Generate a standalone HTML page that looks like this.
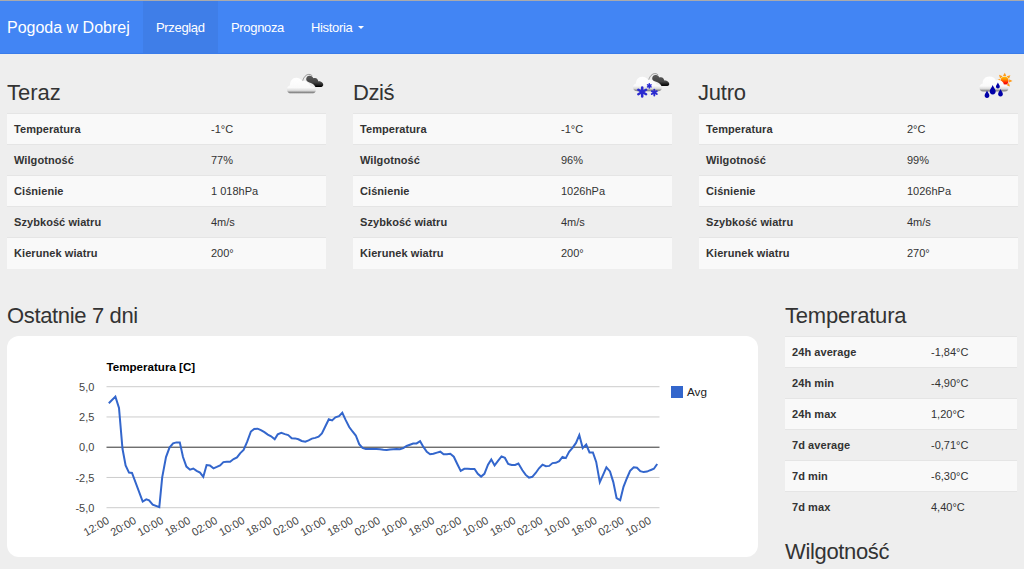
<!DOCTYPE html>
<html><head><meta charset="utf-8">
<style>
*{box-sizing:border-box}
html,body{margin:0;padding:0}
body{width:1024px;height:569px;overflow:hidden;background:#eeeeee;font-family:"Liberation Sans",sans-serif;font-size:11px;color:#333;line-height:1.42857}
.topline{position:absolute;left:0;top:0;width:1024px;height:1px;background:#aaaaac}
.nav{position:absolute;left:0;top:1px;width:1024px;height:53px;background:#4285f4;border-bottom:1px solid #3a7cea}
.brand{position:absolute;left:7px;top:0;height:53px;line-height:53px;font-size:16px;color:#fff}
.ni{position:absolute;top:0;height:52px;line-height:53px;font-size:13px;color:#fff;padding:0 0 0 13px;letter-spacing:-0.33px;white-space:nowrap}
.ni.act{background:#3f7ee8}
.caret{display:inline-block;width:0;height:0;margin-left:2px;vertical-align:middle;border-top:3.5px solid #fff;border-right:3.2px solid transparent;border-left:3.2px solid transparent;position:relative;top:-1px}
h2{position:absolute;margin:0;font-weight:normal;font-size:22px;line-height:24px;color:#333}
table{position:absolute;border-collapse:collapse;border-spacing:0}
td{padding:2px 0 0 7px;height:31px;border-top:1px solid #e5e5e5;font-size:11px;vertical-align:middle;color:#333}
td.k{font-weight:bold;letter-spacing:0.07px}
tr.o td{background:#f9f9f9}
.rt td{padding-top:1px}
.ic{position:absolute;overflow:visible}
.chart{position:absolute;left:7px;top:336px;width:751px;height:221px;background:#fff;border-radius:12px}
</style></head><body>
<div class="topline"></div>
<div class="nav">
 <div class="brand">Pogoda w Dobrej</div>
 <div class="ni act" style="left:143px;width:75px">Przegląd</div>
 <div class="ni" style="left:218px">Prognoza</div>
 <div class="ni" style="left:298px">Historia <span class="caret"></span></div>
</div>

<!--ICONS--><svg width="0" height="0" style="position:absolute"><defs>
<linearGradient id="gw" x1="0" y1="0" x2="0" y2="1"><stop offset="0" stop-color="#ffffff"/><stop offset="0.62" stop-color="#fafafa"/><stop offset="0.8" stop-color="#dcdcdc"/><stop offset="0.93" stop-color="#8a8a8a"/><stop offset="1" stop-color="#b0b0b0"/></linearGradient>
<linearGradient id="gw2" x1="0" y1="0" x2="0" y2="1"><stop offset="0" stop-color="#ffffff"/><stop offset="0.7" stop-color="#fafafa"/><stop offset="0.9" stop-color="#d8d8d8"/><stop offset="1" stop-color="#b8b8b8"/></linearGradient>
<linearGradient id="gd" x1="0" y1="0" x2="0" y2="1"><stop offset="0" stop-color="#5a5a5a"/><stop offset="0.6" stop-color="#444444"/><stop offset="0.85" stop-color="#1a1a1a"/><stop offset="1" stop-color="#000000"/></linearGradient>
<linearGradient id="gs" x1="0" y1="0" x2="0" y2="1"><stop offset="0" stop-color="#ffc200"/><stop offset="0.35" stop-color="#ff8a00"/><stop offset="0.75" stop-color="#ff1a00"/><stop offset="1" stop-color="#f00000"/></linearGradient>
<filter id="bl" x="-10%" y="-10%" width="120%" height="120%"><feGaussianBlur stdDeviation="0.35"/></filter>
</defs></svg>
<svg class="ic" style="left:284px;top:68px" width="44" height="32" viewBox="0 0 44 32"><g filter="url(#bl)"><path d="M22.3,12 C21.8,9 23.8,7.6 26,7.7 C27.6,7.7 28.8,8.8 29.3,10.2 C30.2,9.9 32.4,10 33.4,11.2 C34,12 34.3,12.8 34.3,13.4 C35.6,13.2 37.6,13.6 38.6,15 C39.8,16.6 39.4,18.4 37.4,18.9 L31.5,18.9 C30,16 27,14.6 25.4,14.4 C24,14 22.6,13.2 22.3,12 Z" fill="url(#gd)"/><path d="M18.8,12.6 C19.6,9.2 22.2,6.4 24.8,6.4 C26.4,6.4 27.6,7 28.2,7.9" fill="none" stroke="#8c8c8c" stroke-width="0.9"/><path d="M7.6,25.6 C4.8,25.6 3,23.8 3,21.4 C3,19.4 4.2,17.8 6,17.2 C5.8,13 8.6,9.8 12.2,9.8 C15,9.8 17.2,11.2 18.3,13.2 C19.8,12.8 22,13.2 23.6,14.4 C25.2,15.6 26.2,17 26.6,18.2 C29.6,18.4 31.8,19.8 31.8,22.2 C31.8,24.4 30,25.6 27.4,25.6 Z" fill="url(#gw)"/></g></svg>
<svg class="ic" style="left:630px;top:67px" width="44" height="34" viewBox="0 0 44 34"><g filter="url(#bl)"><path d="M22.3,12 C21.8,9 23.8,7.6 26,7.7 C27.6,7.7 28.8,8.8 29.3,10.2 C30.2,9.9 32.4,10 33.4,11.2 C34,12 34.3,12.8 34.3,13.4 C35.6,13.2 37.6,13.6 38.6,15 C39.8,16.6 39.4,18.4 37.4,18.9 L31.5,18.9 C30,16 27,14.6 25.4,14.4 C24,14 22.6,13.2 22.3,12 Z" fill="url(#gd)" transform="translate(0,0.2)"/><path d="M18.8,12.6 C19.6,9.2 22.2,6.4 24.8,6.4 C26.4,6.4 27.6,7 28.2,7.9" fill="none" stroke="#8c8c8c" stroke-width="0.9" transform="translate(0,0.2)"/><path d="M7.6,25.6 C4.8,25.6 3,23.8 3,21.4 C3,19.4 4.2,17.8 6,17.2 C5.8,13 8.6,9.8 12.2,9.8 C15,9.8 17.2,11.2 18.3,13.2 C19.8,12.8 22,13.2 23.6,14.4 C25.2,15.6 26.2,17 26.6,18.2 C29.6,18.4 31.8,19.8 31.8,22.2 C31.8,24.4 30,25.6 27.4,25.6 Z" fill="url(#gw)" transform="translate(0,0.6) scale(1,0.93)"/><g stroke="#2b2bd0" stroke-width="2.50" stroke-linecap="round"><line x1="12.20" y1="20.50" x2="12.20" y2="29.50"/><line x1="16.10" y1="22.75" x2="8.30" y2="27.25"/><line x1="16.10" y1="27.25" x2="8.30" y2="22.75"/></g><g stroke="#2b2bd0" stroke-width="1.60" stroke-linecap="round"><line x1="19.30" y1="16.90" x2="19.30" y2="20.90"/><line x1="21.03" y1="17.90" x2="17.57" y2="19.90"/><line x1="21.03" y1="19.90" x2="17.57" y2="17.90"/></g><g stroke="#2b2bd0" stroke-width="1.90" stroke-linecap="round"><line x1="24.30" y1="22.70" x2="24.30" y2="28.50"/><line x1="26.81" y1="24.15" x2="21.79" y2="27.05"/><line x1="26.81" y1="27.05" x2="21.79" y2="24.15"/></g></g></svg>
<svg class="ic" style="left:976px;top:67px" width="44" height="34" viewBox="0 0 44 34"><g filter="url(#bl)"><path d="M26.93,9.06 L30.39,9.18 L28.78,5.70 Z" fill="#ff9a1a"/><path d="M30.68,9.31 L33.03,11.83 L34.35,8.24 Z" fill="#ff9a1a"/><path d="M33.14,12.13 L33.02,15.59 L36.50,13.98 Z" fill="#ff9a1a"/><path d="M32.89,15.88 L30.37,18.23 L33.96,19.55 Z" fill="#ff9a1a"/><path d="M30.07,18.34 L26.61,18.22 L28.22,21.70 Z" fill="#ff9a1a"/><path d="M26.32,18.09 L23.97,15.57 L22.65,19.16 Z" fill="#ff9a1a"/><path d="M23.86,15.27 L23.98,11.81 L20.50,13.42 Z" fill="#ff9a1a"/><path d="M24.11,11.52 L26.63,9.17 L23.04,7.85 Z" fill="#ff9a1a"/><circle cx="28.50" cy="13.70" r="4.00" fill="url(#gs)"/><path fill="url(#gw)" d="M7.6,24.8 C5,24.8 3.4,23 3.4,20.8 C3.4,18.6 4.8,17 6.7,16.5 C6.4,12.4 9.6,9.6 13.4,9.6 C16.4,9.6 18.8,11.2 20,13.4 C21.6,12.6 24,12.8 25.6,14 C27.2,15.2 27.8,16.6 27.8,17.6 C30.4,17.4 32.4,18.8 32.4,21.2 C32.4,23.6 30.6,24.8 28.4,24.8 Z"/><path d="M11.00,23.40 C11.72,25.32 13.16,26.76 13.28,27.96 A2.40,2.40 0 1 1 8.72,27.96 C8.84,26.76 10.28,25.32 11.00,23.40 Z" fill="#0000a8"/><path d="M16.70,17.90 C17.60,20.30 19.40,22.10 19.55,23.60 A3.00,3.00 0 1 1 13.85,23.60 C14.00,22.10 15.80,20.30 16.70,17.90 Z" fill="#0000a8"/><path d="M21.90,15.50 C22.47,17.02 23.61,18.16 23.70,19.11 A1.90,1.90 0 1 1 20.09,19.11 C20.19,18.16 21.33,17.02 21.90,15.50 Z" fill="#0000a8"/><path d="M24.50,21.90 C25.22,23.82 26.66,25.26 26.78,26.46 A2.40,2.40 0 1 1 22.22,26.46 C22.34,25.26 23.78,23.82 24.50,21.90 Z" fill="#0000a8"/></g></svg><!--/ICONS-->
<h2 style="left:7px;top:81px">Teraz</h2>
<h2 style="left:353px;top:81px;letter-spacing:-0.4px">Dziś</h2>
<h2 style="left:698px;top:81px;letter-spacing:-0.2px">Jutro</h2>

<table style="left:7px;top:113px;width:319px">
<tr class="o"><td class="k" style="width:197px">Temperatura</td><td>-1°C</td></tr>
<tr><td class="k">Wilgotność</td><td>77%</td></tr>
<tr class="o"><td class="k">Ciśnienie</td><td>1 018hPa</td></tr>
<tr><td class="k">Szybkość wiatru</td><td>4m/s</td></tr>
<tr class="o"><td class="k">Kierunek wiatru</td><td>200°</td></tr>
</table>
<table style="left:353px;top:113px;width:319px">
<tr class="o"><td class="k" style="width:201px">Temperatura</td><td>-1°C</td></tr>
<tr><td class="k">Wilgotność</td><td>96%</td></tr>
<tr class="o"><td class="k">Ciśnienie</td><td>1026hPa</td></tr>
<tr><td class="k">Szybkość wiatru</td><td>4m/s</td></tr>
<tr class="o"><td class="k">Kierunek wiatru</td><td>200°</td></tr>
</table>
<table style="left:699px;top:113px;width:319px">
<tr class="o"><td class="k" style="width:201px">Temperatura</td><td>2°C</td></tr>
<tr><td class="k">Wilgotność</td><td>99%</td></tr>
<tr class="o"><td class="k">Ciśnienie</td><td>1026hPa</td></tr>
<tr><td class="k">Szybkość wiatru</td><td>4m/s</td></tr>
<tr class="o"><td class="k">Kierunek wiatru</td><td>270°</td></tr>
</table>

<h2 style="left:7px;top:304px;letter-spacing:-0.35px">Ostatnie 7 dni</h2>
<div class="chart">
<svg width="751" height="221" viewBox="0 0 751 221" style="position:absolute;left:0;top:0;font-family:'Liberation Sans',sans-serif">
<text x="99.5" y="34.6" font-size="11.6" font-weight="bold" fill="#000">Temperatura [C]</text>
<rect x="99.5" y="50.20" width="553" height="1" fill="#cccccc"/>
<text x="87.4" y="54.8" font-size="11" text-anchor="end" fill="#444">5,0</text>
<rect x="99.5" y="80.45" width="553" height="1" fill="#cccccc"/>
<text x="87.4" y="85" font-size="11" text-anchor="end" fill="#444">2,5</text>
<rect x="99.5" y="110.70" width="553" height="1" fill="#333333"/>
<text x="87.4" y="115.3" font-size="11" text-anchor="end" fill="#444">0,0</text>
<rect x="99.5" y="140.95" width="553" height="1" fill="#cccccc"/>
<text x="87.4" y="145.5" font-size="11" text-anchor="end" fill="#444">-2,5</text>
<rect x="99.5" y="171.20" width="553" height="1" fill="#cccccc"/>
<text x="87.4" y="175.8" font-size="11" text-anchor="end" fill="#444">-5,0</text>
<polyline fill="none" stroke="#3366cc" stroke-width="2" points="101.8,67.3 108.4,60.6 112,72 115.5,112.8 118.6,129.4 122,136.6 125,137 135.7,165.5 139.3,163.4 142.1,164.3 145.7,168.6 152.3,171.2 155.2,141.3 159,121.1 162.5,111.6 166.1,107.4 169.4,106.4 172.8,106.4 176,121 179.4,130.6 183,133.7 186.3,132.5 189.6,134.9 193,136.6 196.3,140.8 199.6,129 202.9,129.4 206.5,132.3 209.8,130.9 213.1,129.4 216.4,126.1 219.7,125.7 223.1,125.7 226.6,123 230,121.4 233.3,117.1 236.6,114 240.2,105.7 243.9,95.5 247.2,92.9 250.6,92.7 253.9,94.1 257.4,96.2 260.8,98.6 264.1,100.3 267.7,103.3 270.7,98.4 274.3,96.9 277.9,98.1 281.2,99.1 284.7,102.2 288.1,102.4 291.4,103.3 294.7,105 298.3,105.7 301.6,104.3 304.9,102.6 308.2,101.9 311.6,100.7 314.9,97.4 318.4,90.3 321.8,83.2 325.1,84.4 328.4,81.3 332,80.1 335.3,76.8 338.6,83.9 342.2,91 345.5,95.5 348.8,99.5 352.2,108.1 355.5,111.9 358.8,113.1 362.4,113.1 365.9,113.1 369.5,113.1 373,113.3 376.4,113.8 379.7,114 383,113.5 386.3,113.3 389.6,113.1 392.9,113.3 396.3,112.1 399.6,110 402.9,108.8 406.2,107.6 409.6,107.4 413.1,105.2 416.4,110.9 419.8,115.9 423.1,118.3 426.4,117.8 430,116.6 433.3,115.7 436.6,118.3 439.9,118.3 443.3,117.8 446.8,120.7 450.4,128.3 453.7,134.9 457.3,132.8 460.6,132.8 463.9,133 467.5,133 470.8,137.8 474.1,140.6 477.4,137.8 481,128.7 484.3,123.5 487.6,129.4 491.2,124.7 494.5,120.4 497.9,121.9 501.2,128 504.7,129 508.1,129 511.4,127.6 515.4,134.2 518.7,138.9 522,141.6 525.3,140.8 528.7,137 532,132.3 535.5,128.7 538.9,130.2 542.2,129.9 545.5,127.1 548.8,126.8 552.2,125.2 555.5,120.9 558.8,122.1 562.1,115.9 565.7,111.6 569,106.9 572.3,99.1 575.7,112.1 579.2,108.6 582.5,116.4 585.9,116.4 589.2,125.9 592.8,146.1 596.1,138.9 599.4,131.3 603,135.4 606.3,146.1 609.6,162.2 613.2,164.3 616.5,150.8 619.8,142.5 623.1,134.9 626.7,131.3 630,131.8 633.3,135.1 636.7,136.1 640,135.6 643.3,134.2 646.9,132.8 650.2,128"/>
<text x="103" y="186.8" font-size="11" text-anchor="end" fill="#444" transform="rotate(-30 103 186.8)">12:00</text>
<text x="130.1" y="186.8" font-size="11" text-anchor="end" fill="#444" transform="rotate(-30 130.1 186.8)">20:00</text>
<text x="157.2" y="186.8" font-size="11" text-anchor="end" fill="#444" transform="rotate(-30 157.2 186.8)">10:00</text>
<text x="184.3" y="186.8" font-size="11" text-anchor="end" fill="#444" transform="rotate(-30 184.3 186.8)">18:00</text>
<text x="211.4" y="186.8" font-size="11" text-anchor="end" fill="#444" transform="rotate(-30 211.4 186.8)">02:00</text>
<text x="238.5" y="186.8" font-size="11" text-anchor="end" fill="#444" transform="rotate(-30 238.5 186.8)">10:00</text>
<text x="265.6" y="186.8" font-size="11" text-anchor="end" fill="#444" transform="rotate(-30 265.6 186.8)">18:00</text>
<text x="292.7" y="186.8" font-size="11" text-anchor="end" fill="#444" transform="rotate(-30 292.7 186.8)">02:00</text>
<text x="319.8" y="186.8" font-size="11" text-anchor="end" fill="#444" transform="rotate(-30 319.8 186.8)">10:00</text>
<text x="346.9" y="186.8" font-size="11" text-anchor="end" fill="#444" transform="rotate(-30 346.9 186.8)">18:00</text>
<text x="374" y="186.8" font-size="11" text-anchor="end" fill="#444" transform="rotate(-30 374 186.8)">02:00</text>
<text x="401.1" y="186.8" font-size="11" text-anchor="end" fill="#444" transform="rotate(-30 401.1 186.8)">10:00</text>
<text x="428.2" y="186.8" font-size="11" text-anchor="end" fill="#444" transform="rotate(-30 428.2 186.8)">18:00</text>
<text x="455.3" y="186.8" font-size="11" text-anchor="end" fill="#444" transform="rotate(-30 455.3 186.8)">02:00</text>
<text x="482.4" y="186.8" font-size="11" text-anchor="end" fill="#444" transform="rotate(-30 482.4 186.8)">10:00</text>
<text x="509.5" y="186.8" font-size="11" text-anchor="end" fill="#444" transform="rotate(-30 509.5 186.8)">18:00</text>
<text x="536.6" y="186.8" font-size="11" text-anchor="end" fill="#444" transform="rotate(-30 536.6 186.8)">02:00</text>
<text x="563.7" y="186.8" font-size="11" text-anchor="end" fill="#444" transform="rotate(-30 563.7 186.8)">10:00</text>
<text x="590.8" y="186.8" font-size="11" text-anchor="end" fill="#444" transform="rotate(-30 590.8 186.8)">18:00</text>
<text x="617.9" y="186.8" font-size="11" text-anchor="end" fill="#444" transform="rotate(-30 617.9 186.8)">02:00</text>
<text x="645" y="186.8" font-size="11" text-anchor="end" fill="#444" transform="rotate(-30 645 186.8)">10:00</text>
<rect x="664" y="50" width="12" height="12" fill="#3366cc"/>
<text x="680" y="60" font-size="11.7" fill="#222">Avg</text>
</svg>
</div>

<h2 style="left:785px;top:304px;letter-spacing:-0.2px">Temperatura</h2>
<table class="rt" style="left:785px;top:336px;width:232px">
<tr class="o"><td class="k" style="width:139px">24h average</td><td>-1,84°C</td></tr>
<tr><td class="k">24h min</td><td>-4,90°C</td></tr>
<tr class="o"><td class="k">24h max</td><td>1,20°C</td></tr>
<tr><td class="k">7d average</td><td>-0,71°C</td></tr>
<tr class="o"><td class="k">7d min</td><td>-6,30°C</td></tr>
<tr><td class="k">7d max</td><td>4,40°C</td></tr>
</table>
<h2 style="left:785px;top:540px;letter-spacing:-0.34px">Wilgotność</h2>
</body></html>
